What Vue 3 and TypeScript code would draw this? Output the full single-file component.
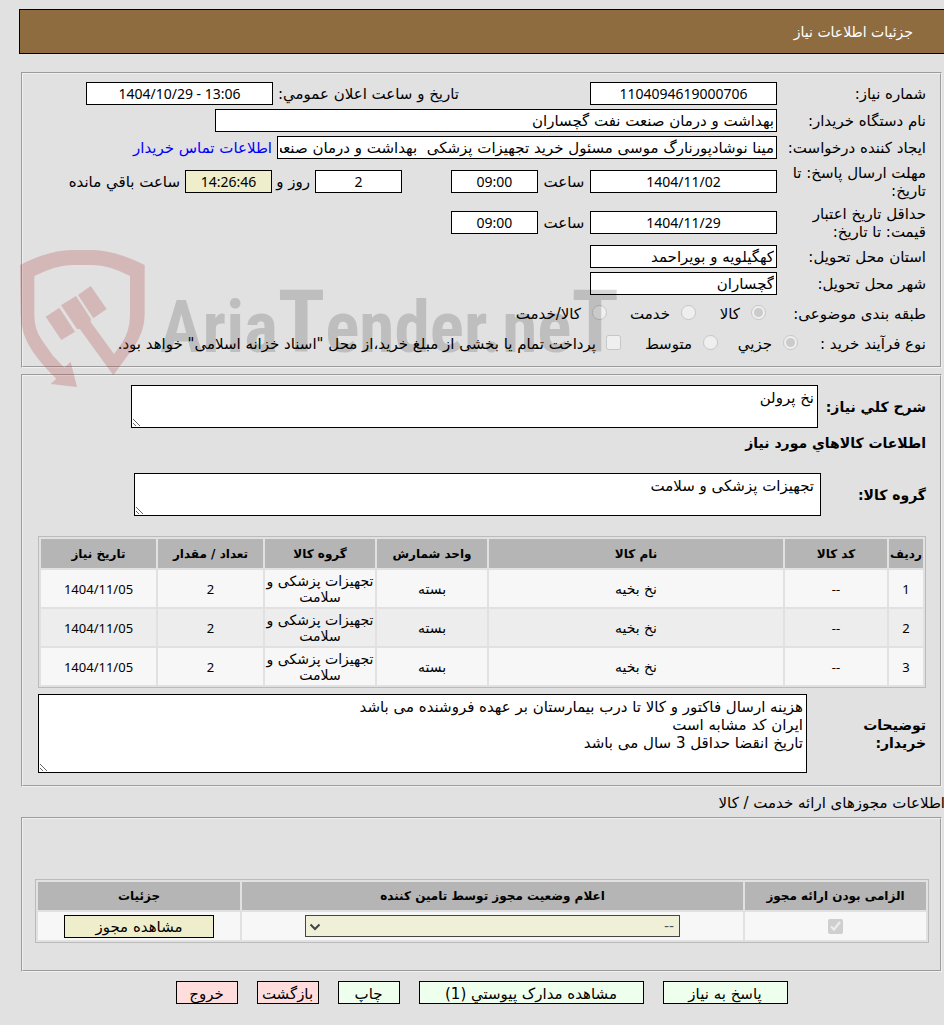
<script setup lang="ts">
import { ref } from 'vue'

interface Item {
  row: number
  code: string
  name: string
  unit: string
  group: string
  amount: number
  date: string
}

const items: Item[] = [1, 2, 3].map((row) => ({
  row,
  code: '--',
  name: 'نخ بخیه',
  unit: 'بسته',
  group: 'تجهیزات پزشکی و سلامت',
  amount: 2,
  date: '1404/11/05',
}))

const subject = ref('goods')
const process = ref('small')
const treasury = ref(false)
const summary = ref('نخ پرولن')
const goodsGroup = ref('تجهیزات پزشکی و سلامت')
const notes = ref(
  'هزینه ارسال فاکتور و کالا تا درب بیمارستان بر عهده فروشنده می باشد\nایران کد مشابه است\nتاریخ انقضا حداقل 3 سال می باشد',
)
const creator = 'مینا نوشادپورنارگ موسی مسئول خرید تجهیزات پزشکی  بهداشت و درمان صنعت نفت گچساران'
</script>

<template>
  <div class="page" dir="rtl">
    <header class="title"><h1>جزئیات اطلاعات نیاز</h1></header>

    <main>
      <section class="panel info">
        <div class="row">
          <label class="lbl" for="no">شماره نیاز:</label>
          <input id="no" class="box num wide" value="1104094619000706" readonly />
          <label class="announce" for="pub">تاریخ و ساعت اعلان عمومي:</label>
          <input id="pub" class="box num wide" dir="ltr" value="1404/10/29 - 13:06" readonly />
        </div>
        <div class="row">
          <label class="lbl" for="org">نام دستگاه خریدار:</label>
          <input id="org" class="box org" value="بهداشت و درمان صنعت نفت گچساران" readonly />
        </div>
        <div class="row">
          <label class="lbl" for="creator">ایجاد کننده درخواست:</label>
          <input id="creator" class="box creator" :value="creator" readonly />
          <a class="contact" href="#">اطلاعات تماس خریدار</a>
        </div>
        <div class="row tall">
          <label class="lbl" for="dl">مهلت ارسال پاسخ: تا<br />تاریخ:</label>
          <input id="dl" class="box num wide" value="1404/11/02" readonly />
          <label class="hour" for="dlh">ساعت</label>
          <input id="dlh" class="box num short" value="09:00" readonly />
          <input id="days" class="box num short days" value="2" readonly />
          <label class="and" for="days">روز و</label>
          <input id="left" class="box num short timer" value="14:26:46" readonly />
          <label class="remain" for="left">ساعت باقي مانده</label>
        </div>
        <div class="row tall">
          <label class="lbl" for="val">حداقل تاریخ اعتبار<br />قیمت: تا تاریخ:</label>
          <input id="val" class="box num wide" value="1404/11/29" readonly />
          <label class="hour" for="valh">ساعت</label>
          <input id="valh" class="box num short" value="09:00" readonly />
        </div>
        <div class="row">
          <label class="lbl" for="prov">استان محل تحویل:</label>
          <input id="prov" class="box wide" value="کهگیلویه و بویراحمد" readonly />
        </div>
        <div class="row">
          <label class="lbl" for="city">شهر محل تحویل:</label>
          <input id="city" class="box wide" value="گچساران" readonly />
        </div>
        <div class="row choices">
          <span class="lbl subject">طبقه بندی موضوعی:</span>
          <label class="choice c1"><input v-model="subject" type="radio" value="goods" disabled /><span>کالا</span></label>
          <label class="choice c2"><input v-model="subject" type="radio" value="service" disabled /><span>خدمت</span></label>
          <label class="choice"><input v-model="subject" type="radio" value="both" disabled /><span>کالا/خدمت</span></label>
        </div>
        <div class="row choices">
          <span class="lbl process">نوع فرآیند خرید :</span>
          <label class="choice c3"><input v-model="process" type="radio" value="small" disabled /><span>جزیي</span></label>
          <label class="choice c4"><input v-model="process" type="radio" value="medium" disabled /><span>متوسط</span></label>
          <label class="choice pay"><input v-model="treasury" type="checkbox" disabled /><span>پرداخت تمام یا بخشی از مبلغ خرید،از محل "اسناد خزانه اسلامی" خواهد بود.</span></label>
        </div>
      </section>

      <section class="panel goods">
        <div class="area-row">
          <label for="summary">شرح کلي نیاز:</label>
          <textarea id="summary" v-model="summary" class="a1"></textarea>
        </div>
        <h2>اطلاعات کالاهاي مورد نیاز</h2>
        <div class="area-row">
          <label for="group">گروه کالا:</label>
          <textarea id="group" v-model="goodsGroup" class="a2"></textarea>
        </div>
        <table class="items">
          <colgroup>
            <col class="w-row" /><col class="w-code" /><col /><col class="w-unit" /><col class="w-unit" /><col class="w-amount" /><col class="w-date" />
          </colgroup>
          <thead>
            <tr>
              <th>ردیف</th><th>کد کالا</th><th>نام کالا</th><th>واحد شمارش</th><th>گروه کالا</th><th>تعداد / مقدار</th><th>تاریخ نیاز</th>
            </tr>
          </thead>
          <tbody>
            <tr v-for="item in items" :key="item.row">
              <td class="n">{{ item.row }}</td>
              <td class="n">{{ item.code }}</td>
              <td>{{ item.name }}</td>
              <td>{{ item.unit }}</td>
              <td>{{ item.group }}</td>
              <td class="n">{{ item.amount }}</td>
              <td class="n">{{ item.date }}</td>
            </tr>
          </tbody>
        </table>
        <div class="area-row notes">
          <label for="notes">توضیحات خریدار:</label>
          <textarea id="notes" v-model="notes" class="a3"></textarea>
        </div>
      </section>

      <h3>اطلاعات مجوزهای ارائه خدمت / کالا</h3>
      <section class="panel permits">
        <table>
          <colgroup><col class="w-req" /><col /><col class="w-detail" /></colgroup>
          <thead>
            <tr><th>الزامی بودن ارائه مجوز</th><th>اعلام وضعیت مجوز توسط تامین کننده</th><th>جزئیات</th></tr>
          </thead>
          <tbody>
            <tr>
              <td><input type="checkbox" checked disabled aria-label="الزامی بودن ارائه مجوز" /></td>
              <td>
                <span class="select">
                  <select disabled aria-label="اعلام وضعیت مجوز"><option>--</option></select>
                  <svg viewBox="0 0 12 8" aria-hidden="true"><path d="M1.5 1.5 6 6l4.500-4.500" /></svg>
                </span>
              </td>
              <td><button class="view" type="button">مشاهده مجوز</button></td>
            </tr>
          </tbody>
        </table>
      </section>

      <div class="actions">
        <button class="b-answer" type="button">پاسخ به نیاز</button>
        <button class="b-docs" type="button">مشاهده مدارک پیوستي (1)</button>
        <button type="button">چاپ</button>
        <button class="red" type="button">بازگشت</button>
        <button class="red" type="button">خروج</button>
      </div>
    </main>

    <svg class="watermark" viewBox="60 150 1860 414" direction="ltr" aria-hidden="true">
      <g class="shield">
        <path d="M60 195Q148 150 215 150H280Q348 152 434 195V345Q434 395 400 443L340 526 240 388 231 387 183 316 228 288 273 357 272 366 342 462 366 429Q390 392 390 345V228Q325 195 280 195H215Q170 195 103 228V345Q103 390 127 422L159 467 193 503 212 485 231 561 152 552 169 536Q132 502 99 456 62 402 62 345Z" />
        <path d="M137 350 178 323 225 395 184 420ZM234 285 272 258 320 327 280 355Z" />
      </g>
      <text x="480" y="455">Aria<tspan class="big">T</tspan>ender.ne<tspan class="big">T</tspan></text>
    </svg>
  </div>
</template>

<style>
html,
body {
  background: #e1e1e1;
}
</style>

<style scoped>
.page,
.page * {
  box-sizing: border-box;
}
.page {
  position: relative;
  padding-top: 9px;
  overflow: hidden;
  color: #000;
  font: 15px/18px "DejaVu Sans", sans-serif;
}
input,
textarea,
select,
button {
  font: inherit;
  color: inherit;
  margin: 0;
  border-radius: 0;
}
.title {
  display: flex;
  align-items: center;
  height: 45px;
  margin-left: 19px;
  padding: 0 31px;
  background: #8e6c40;
  border: 1px solid #000;
  border-right: 0;
  color: #fff;
}
h1,
h2,
h3 {
  margin: 0;
  font-size: 14px;
  font-weight: 400;
}
main {
  margin: 18px 2px 0 21px;
}
.panel {
  border: 2px groove #f0f0f0;
}
.info {
  padding: 6px 14px 9px;
}
.row {
  display: flex;
  align-items: center;
  height: 27px;
  white-space: nowrap;
}
.tall {
  height: 41px;
}
.lbl {
  flex: none;
  width: 149px;
}
.box {
  flex: none;
  height: 23px;
  padding: 0 2px;
  background: #fff;
  border: 1px solid #000;
}
.num {
  font-family: "Noto Sans", "DejaVu Sans", sans-serif;
  font-size: 14px;
  text-align: center;
}
.wide {
  width: 187px;
}
.org {
  width: 562px;
}
.creator {
  width: 500px;
  white-space: pre;
}
.short {
  width: 87px;
}
.announce {
  width: 317px;
  padding-left: 5px;
  text-align: left;
}
.contact {
  margin-right: 5px;
  color: #00f;
  text-decoration: none;
}
.hour {
  width: 52px;
  text-align: center;
}
.days {
  margin-right: 49px;
}
.and {
  width: 43px;
  padding-right: 5px;
}
.timer {
  background: #eeeecc;
}
.remain {
  margin-right: 5px;
}
.choices {
  height: 30px;
}
.choices .lbl {
  padding-top: 4px;
}
.subject {
  width: 160px;
}
.process {
  width: 128px;
}
.choice {
  display: flex;
  align-items: center;
  gap: 11px;
}
.choice span {
  padding-top: 4px;
}
.choice input {
  flex: none;
  width: 15px;
  height: 15px;
}
.choice.pay {
  gap: 10px;
}
.c1 {
  width: 70px;
}
.c2 {
  width: 89px;
}
.c3 {
  width: 80px;
}
.c4 {
  width: 97px;
}
.goods {
  margin-top: 6px;
  padding: 9px 14px 12px 15px;
}
.area-row {
  display: flex;
  align-items: center;
}
.area-row label {
  flex: none;
  width: 108px;
  font-size: 14px;
  font-weight: 700;
}
textarea {
  display: block;
  flex: 1;
  height: 43px;
  padding: 3px;
  background: #fff;
  border: 1px solid #000;
  line-height: 18px;
}
.area-row .a1 {
  margin-left: 93px;
}
.area-row .a2 {
  margin-right: -3px;
  margin-left: 96px;
  padding-right: 6px;
}
h2 {
  margin: 6px 0 21px;
  font-size: 14px;
  font-weight: 700;
}
table {
  width: 100%;
  table-layout: fixed;
  border: 1px solid #bbb;
  border-collapse: separate;
  border-spacing: 2px;
  text-align: center;
  line-height: 16px;
}
.items {
  margin-top: 20px;
}
th {
  height: 29px;
  padding: 0;
  background: #b5b5b5;
  font-size: 12px;
  white-space: nowrap;
}
td {
  height: 37px;
  padding: 0;
  background: #f7f7f7;
  font-size: 14px;
}
tbody tr:nth-child(even) td {
  background: #ededed;
}
td.n {
  font-family: "Noto Sans", "DejaVu Sans", sans-serif;
  font-size: 13px;
}
.w-row {
  width: 34px;
}
.w-code {
  width: 102px;
}
.w-unit {
  width: 110px;
}
.w-amount {
  width: 105px;
}
.w-date {
  width: 115px;
}
.notes {
  margin-top: 6px;
}
.area-row.notes label {
  width: 119px;
  padding-left: 40px;
}
.area-row .a3 {
  height: 79px;
}
h3 {
  margin: 7px -3px 5px 0;
  font-size: 15px;
}
.permits {
  padding: 60px 11px 27px 12px;
}
.permits th {
  height: 28px;
}
.permits td {
  height: 28px;
}
.permits td input {
  display: block;
  width: 15px;
  height: 15px;
  margin: 0 auto;
}
.w-req {
  width: 181px;
}
.w-detail {
  width: 202px;
}
.select {
  position: relative;
  display: block;
  width: 375px;
  max-width: 100%;
  margin: 0 auto;
}
.select select {
  display: block;
  width: 100%;
  height: 22px;
  padding: 0 5px;
  appearance: none;
  background: #f0efd8;
  border: 1px solid #444;
  color: #555;
  opacity: 1;
}
.select svg {
  position: absolute;
  left: 4px;
  top: 8px;
  width: 12px;
  height: 8px;
  fill: none;
  stroke: #444;
  stroke-width: 2;
}
button {
  height: 23px;
  padding: 2px 0 0;
  border: 1px solid #000;
  background: #eeffee;
  line-height: 18px;
}
button.view {
  display: block;
  width: 150px;
  margin: 0 auto;
  background: #eeeecc;
  font-size: 15px;
}
.actions {
  display: flex;
  justify-content: center;
  gap: 19px;
  margin: 9px 0 22px;
}
.actions button {
  width: 62px;
  white-space: nowrap;
}
.actions .b-answer {
  width: 125px;
}
.actions .b-docs {
  width: 225px;
}
.actions .red {
  background: #ffdddd;
}
.watermark {
  position: absolute;
  left: 20px;
  top: 250px;
  width: 620px;
  height: 138px;
  pointer-events: none;
}
.shield {
  fill: #b14141;
  opacity: 0.25;
}
.watermark text {
  fill: #000;
  opacity: 0.15;
  direction: ltr;
  font-family: "Liberation Sans Narrow", "Roboto Condensed", "Liberation Sans", sans-serif;
  font-size: 214px;
  font-weight: 700;
}
.watermark .big {
  font-size: 262px;
}
</style>
